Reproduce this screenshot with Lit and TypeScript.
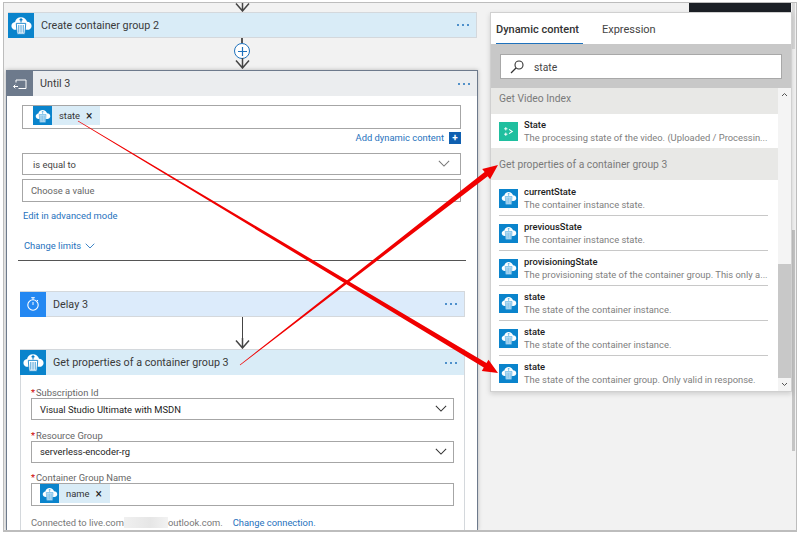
import { LitElement, html, css, svg } from "lit";
import { customElement } from "lit/decorators.js";

const cloud = (size: number, bin = "#fff", line = "#0a7fc9") => html`<svg width=${size} height=${size} viewBox="0 0 26 26">
  <path fill="#fff" d="M7 17.500c-2.600 0-4.500-1.800-4.500-4.100 0-2.200 1.700-3.900 3.800-4.100C6.900 6.500 9.300 4.500 12.500 4.500c3 0 5.500 1.900 6.300 4.700 2.600 0 4.700 1.900 4.700 4.200 0 2.300-1.900 4.100-4.400 4.100z"/>
  <path fill=${bin} stroke=${line} stroke-width=".9" d="M7.600 10.800h9.800l-.8 11.200H8.400z"/>
  <path stroke=${line} stroke-width=".8" d="M10.200 12.500v8M12.500 12.500v8M14.800 12.500v8" fill="none"/>
  <path stroke=${line} stroke-width="1.100" d="M12.500 6v4M11 7.500l1.500-1.500L14 7.500" fill="none"/>
</svg>`;

const small = (size = 18) => cloud(size, "#bfe0f5", "#5aaee0");

const chevron = (w = 14, color = "#555") => html`<svg class="chev" width=${w} height=${w * 0.6} viewBox="0 0 14 8.400"><path d="M1 1l6 6 6-6" fill="none" stroke=${color} stroke-width="1.200"/></svg>`;

const more = html`<span class="more"><i></i><i></i><i></i></span>`;

const arrowDown = html`<svg class="arrow" width="15" height="11" viewBox="0 0 15 11"><path d="M7.500 0v10M1 2.500l6.500 7.500 6.500-7.500" fill="none" stroke="#444" stroke-width="1.500"/></svg>`;

function taper(x1: number, y1: number, x2: number, y2: number) {
  const dx = x2 - x1, dy = y2 - y1, L = Math.hypot(dx, dy);
  const ux = dx / L, uy = dy / L, nx = -uy, ny = ux;
  const bx = x2 - ux * 15, by = y2 - uy * 15;
  const p = (x: number, y: number, o: number) => `${(x + nx * o).toFixed(1)},${(y + ny * o).toFixed(1)}`;
  return [p(x1, y1, 0.4), p(bx, by, 2.6), p(bx, by, 6.5), p(x2, y2, 0), p(bx, by, -6.5), p(bx, by, -2.6), p(x1, y1, -0.4)].join(" ");
}

const items = [
  ["currentState", "The container instance state."],
  ["previousState", "The container instance state."],
  ["provisioningState", "The provisioning state of the container group. This only a..."],
  ["state", "The state of the container instance."],
  ["state", "The state of the container instance."],
  ["state", "The state of the container group. Only valid in response."],
];

@customElement("app-root")
export class AppRoot extends LitElement {
  static styles = css`
    :host { display: block; width: 800px; height: 534px; position: relative; overflow: hidden; background: #fff;
      font-family: Roboto, "Open Sans", sans-serif; font-size: 10px; color: #333; }
    * { box-sizing: border-box; }
    .frame { height: 530px; margin: 2px 3px; background: #f2f2f2; border: 1px solid #bdbdbd; border-bottom-width: 2px; padding: 0 0 0 2px; display: flex; flex-direction: column; overflow: hidden; width: 794px; }
    .col { width: 472px; display: flex; flex-direction: column; align-items: stretch; flex: 1; min-height: 0; }
    .top-arrow { height: 9px; display: flex; align-items: flex-end; justify-content: center; }
    .card { display: flex; align-items: center; height: 26px; flex: none; border: 1px solid #d4d8dc; }
    .card .ico { width: 26px; height: 25px; margin: 0 0 0 -1px; flex: none; display: flex; align-items: center; justify-content: center; background: #0a84cc; }
    .card .title { flex: 1; padding-left: 7px; font-size: 10.750px; color: #3a3a3a; white-space: nowrap; }
    .more { display: flex; gap: 3px; margin-right: 7px; }
    .more i { width: 2px; height: 2px; border-radius: 50%; background: #1f72bd; display: block; }
    .card.blue { background: #d9ecf7; }
    .first { margin: 0 1px 0 2px; }
    .link-gap { height: 32px; flex: none; display: flex; flex-direction: column; align-items: center; }
    .plus-wrap { display: flex; flex-direction: column; align-items: center; }
    .stub { width: 1.500px; height: 5px; background: #555; }
    .plus { width: 16px; height: 16px; border-radius: 50%; border: 1.200px solid #1f72bd; background: #fff; display: flex; align-items: center; justify-content: center; flex: none; }
    .plus-wrap .arrow { margin-top: -1px; }
    .until { flex: 1; min-height: 0; border: 1px solid #6d7a8c; border-bottom: 0; background: #fff; box-shadow: 0 0 4px rgba(0,0,0,.25); width: 472px; display: flex; flex-direction: column; }
    .until > .card { border: 0; background: #ebedef; height: 25px; }
    .until > .card .ico { background: #6d7a8c; margin: 0; }
    .until-body { padding: 9px 16px 0 15px; flex: 1; display: flex; flex-direction: column; min-height: 0; }
    .box { border: 1px solid #a6a6a6; background: #fff; display: flex; align-items: center; font-size: 9.400px; color: #444; }
    .token { display: flex; align-items: center; background: #d9ecf7; height: 19px; color: #333; font-size: 9.400px; }
    .token .tico { width: 19px; height: 19px; background: #0a84cc; display: flex; align-items: center; justify-content: center; flex: none; }
    .token span { margin-left: 7px; }
    .token em { font-style: normal; font-size: 12px; margin: 0 8px 0 6px; line-height: 1; color: #222; }
    .cond { height: 24px; padding-left: 10px; align-items: flex-start; }
    .dyn { display: flex; justify-content: flex-end; align-items: flex-start; gap: 5px; height: 24px; color: #1f72bd; font-size: 9.400px; padding-top: 3px; line-height: 12px; }
    .dyn i { width: 12px; height: 12px; background: #1060b0; color: #fff; font-style: normal; font-size: 10px; line-height: 12px; text-align: center; display: block; font-weight: 700; }
    .sel { height: 22px; justify-content: space-between; padding: 0 10px; flex: none; }
    .val { height: 23px; margin-top: 4px; padding-left: 8px; color: #666; flex: none; }
    .link { color: #1f72bd; font-size: 9.400px; }
    .adv { margin: 7px 0 0 1px; height: 14px; line-height: 14px; flex: none; }
    .limits { margin: 16px 0 0 2px; height: 14px; line-height: 14px; display: flex; align-items: center; gap: 4px; flex: none; }
    .rule { height: 1px; background: #555; margin: 7px -5px 0 -4px; flex: none; }
    .inner { margin: 30px -4px 0 -2px; flex: 1; display: flex; flex-direction: column; min-height: 0; }
    .delay { background: #dcebfb; }
    .delay .ico { background: #2488f2; }
    .stem { height: 32px; flex: none; display: flex; flex-direction: column; align-items: center; }
    .stem .line { width: 1.500px; flex: 1; background: #444; }
    .stem .arrow { margin-top: -8px; }
    .block { flex: 1; display: flex; flex-direction: column; border: 1px solid #d4d8dc; border-bottom: 0; min-height: 0; }
    .block > .card { border: 0; height: 25px; }
    .form { padding: 12px 10px 0 10px; }
    .lab { font-size: 9.400px; color: #666; height: 11px; line-height: 11px; padding-left: 5px; position: relative; }
    .lab::before { content: "*"; color: #c00; position: absolute; left: 0; top: 0; }
    .form .sel { height: 22px; padding: 0 6px 0 8px; color: #222; }
    .form .sel + .lab { margin-top: 9.500px; }
    .form .name { height: 23px; padding-left: 8px; align-items: flex-start; }
    .foot { margin-top: 10.500px; font-size: 9.400px; color: #777; white-space: nowrap; display: flex; align-items: center; height: 12px; }
    .foot .blur { display: inline-block; width: 44px; height: 11px; background: linear-gradient(90deg, #f0f0f0, #e6e6e6 60%, #f2f2f2); }
    .foot .link { margin-left: 10px; }

    .panel { position: absolute; left: 490px; top: 12px; width: 302px; height: 380px; background: #fff; display: flex; flex-direction: column; border: 1px solid #d0d0d0; box-shadow: 0 2px 5px rgba(0,0,0,.15); }
    .tabs { height: 31px; flex: none; display: flex; padding-left: 5px; gap: 19px; align-items: stretch; }
    .tab { font-size: 11px; color: #444; display: flex; align-items: center; border-bottom: 1px solid transparent; padding: 2px 0 0; }
    .tab.on { font-weight: 500; color: #333; border-bottom: 1px solid #1f72bd; padding: 2px 4px 0 0; }
    .searchbar { height: 44px; flex: none; background: #c8c8c8; padding: 10px 9px 9px 9px; }
    .search { height: 25px; background: #fff; border: 1px solid #a8a8a8; display: flex; align-items: center; gap: 10px; padding: 1px 0 0 9px; font-size: 10.300px; color: #444; }
    .lists { flex: 1; display: flex; min-height: 0; }
    .scroll { flex: 1; min-width: 0; display: flex; flex-direction: column; }
    .group { background: #e8e8e6; color: #7a7a7a; font-size: 10.300px; display: flex; padding-left: 8px; flex: none; }
    .g1 { height: 26px; padding-top: 4px; }
    .g2 { height: 32px; align-items: center; padding-top: 1px; }
    .item { height: 34px; flex: none; display: flex; align-items: center; gap: 6px; padding-left: 8px; }
    .item .iic { width: 19px; height: 19px; background: #0a84cc; display: flex; align-items: center; justify-content: center; flex: none; }
    .item .iic.teal { background: #1fbf9f; }
    .item .txt { min-width: 0; width: 245px; padding-top: 1px; }
    .item .n { font-weight: 500; font-size: 9.400px; color: #222; line-height: 12px; }
    .item .d { font-size: 9.400px; color: #808080; line-height: 13px; white-space: nowrap; }
    .sep { border-bottom: 1px solid #c8c8c8; margin-left: 8px; width: 269px; flex: none; height: 1px; }
    .list6 { display: flex; flex-direction: column; padding-top: 1px; }
    .bar { width: 13px; flex: none; background: #f4f4f4; display: flex; flex-direction: column; align-items: center; color: #555; }
    .bar .thumb { width: 100%; height: 114px; background: #c8c8c8; margin-top: auto; }
    .bar .btn { height: 13px; display: flex; align-items: center; justify-content: center; flex: none; }

    .darkbar { position: absolute; left: 689px; top: 3px; width: 102px; height: 9px; background: #1c2026; }
    .pagebar { position: absolute; left: 792px; top: 3px; width: 3px; height: 46px; background: #d8d8d8; }
    .pagebar2 { position: absolute; left: 792px; top: 230px; width: 3px; height: 221px; background: #c4c4c4; }
    .red { position: absolute; left: 0; top: 0; pointer-events: none; }
  `;

  render() {
    const a = [78, 121, 498, 373] as const;
    const b = [240, 365, 498, 165] as const;
    return html`
      <div class="frame">
        <div class="col">
          <div class="top-arrow">${arrowDown}</div>
          <div class="card blue first"><div class="ico">${cloud(25)}</div><div class="title">Create container group 2</div>${more}</div>
          <div class="link-gap">
            <div class="plus-wrap">
              <div class="stub"></div>
              <div class="plus"><svg width="9" height="9" viewBox="0 0 9 9"><path d="M4.500 0v9M0 4.500h9" stroke="#1f72bd" stroke-width="1.200"/></svg></div>
              ${arrowDown}
            </div>
          </div>
          <div class="until">
            <div class="card">
              <div class="ico"><svg width="16" height="14" viewBox="0 0 16 14"><path d="M4 3h10v8.500H6.500M4 3v2.500" fill="none" stroke="#fff" stroke-width="1"/><path d="M1.500 9.500h4.500M3.300 7.700l-1.800 1.800 1.800 1.800" fill="none" stroke="#fff" stroke-width="1"/></svg></div>
              <div class="title">Until 3</div>${more}
            </div>
            <div class="until-body">
              <div class="box cond"><div class="token"><div class="tico">${small()}</div><span>state</span><em>×</em></div></div>
              <div class="dyn"><span>Add dynamic content</span><i>+</i></div>
              <div class="box sel"><span>is equal to</span>${chevron(12, "#777")}</div>
              <div class="box val">Choose a value</div>
              <div class="link adv">Edit in advanced mode</div>
              <div class="link limits"><span>Change limits</span>${chevron(10, "#1f72bd")}</div>
              <div class="rule"></div>
              <div class="inner">
                <div class="card delay"><div class="ico"><svg width="16" height="16" viewBox="0 0 16 16"><circle cx="8" cy="9" r="5.200" fill="none" stroke="#fff" stroke-width="1.100"/><path d="M6.200 1.700h3.600M8 1.700v2M8 9V6M12 4l1 1" fill="none" stroke="#fff" stroke-width="1"/></svg></div><div class="title">Delay 3</div>${more}</div>
                <div class="stem"><div class="line"></div>${arrowDown}</div>
                <div class="block">
                  <div class="card blue"><div class="ico">${cloud(25)}</div><div class="title">Get properties of a container group 3</div>${more}</div>
                  <div class="form">
                    <div class="lab">Subscription Id</div>
                    <div class="box sel"><span>Visual Studio Ultimate with MSDN</span>${chevron(12, "#333")}</div>
                    <div class="lab">Resource Group</div>
                    <div class="box sel"><span>serverless-encoder-rg</span>${chevron(12, "#333")}</div>
                    <div class="lab">Container Group Name</div>
                    <div class="box name"><div class="token"><div class="tico">${small()}</div><span>name</span><em>×</em></div></div>
                    <div class="foot"><span>Connected to live.com</span><span class="blur"></span><span>outlook.com.</span><span class="link">Change connection.</span></div>
                  </div>
                </div>
              </div>
            </div>
          </div>
        </div>
      </div>

      <div class="darkbar"></div><div class="pagebar"></div><div class="pagebar2"></div>

      <div class="panel">
        <div class="tabs"><div class="tab on">Dynamic content</div><div class="tab">Expression</div></div>
        <div class="searchbar"><div class="search">
          <svg width="14" height="14" viewBox="0 0 14 14"><circle cx="9" cy="5" r="4" fill="none" stroke="#333" stroke-width="1.100"/><path d="M6 8l-5 5" stroke="#333" stroke-width="1.300"/></svg><span>state</span>
        </div></div>
        <div class="lists">
          <div class="scroll">
            <div class="group g1">Get Video Index</div>
            <div class="item"><div class="iic teal"><svg width="13" height="13" viewBox="0 0 12 12"><path d="M6.500 4l3 2-3 2" fill="none" stroke="#fff" stroke-width="1"/><path d="M2 3.500h3M3.500 2v3M2 8.500h3M3.500 7v3" stroke="#fff" stroke-width=".9"/></svg></div>
              <div class="txt"><div class="n">State</div><div class="d">The processing state of the video. (Uploaded / Processin...</div></div></div>
            <div class="group g2">Get properties of a container group 3</div>
            <div class="list6">
              ${items.map((it, i) => html`
                <div class="item"><div class="iic">${small()}</div><div class="txt"><div class="n">${it[0]}</div><div class="d">${it[1]}</div></div></div>
                ${i < items.length - 1 ? html`<div class="sep"></div>` : ""}
              `)}
            </div>
          </div>
          <div class="bar">
            <div class="btn"><svg width="7" height="5" viewBox="0 0 7 5"><path d="M1 4l2.500-2.500L6 4" fill="none" stroke="#555" stroke-width="1"/></svg></div>
            <div class="thumb"></div>
            <div class="btn"><svg width="7" height="5" viewBox="0 0 7 5"><path d="M1 1l2.500 2.500L6 1" fill="none" stroke="#555" stroke-width="1"/></svg></div>
          </div>
        </div>
      </div>

      <svg class="red" width="800" height="534" viewBox="0 0 800 534">
        ${svg`<polygon fill="#f00000" points=${taper(a[0], a[1], a[2], a[3])}/>`}
        ${svg`<polygon fill="#f00000" points=${taper(b[0], b[1], b[2], b[3])}/>`}
      </svg>
    `;
  }
}
